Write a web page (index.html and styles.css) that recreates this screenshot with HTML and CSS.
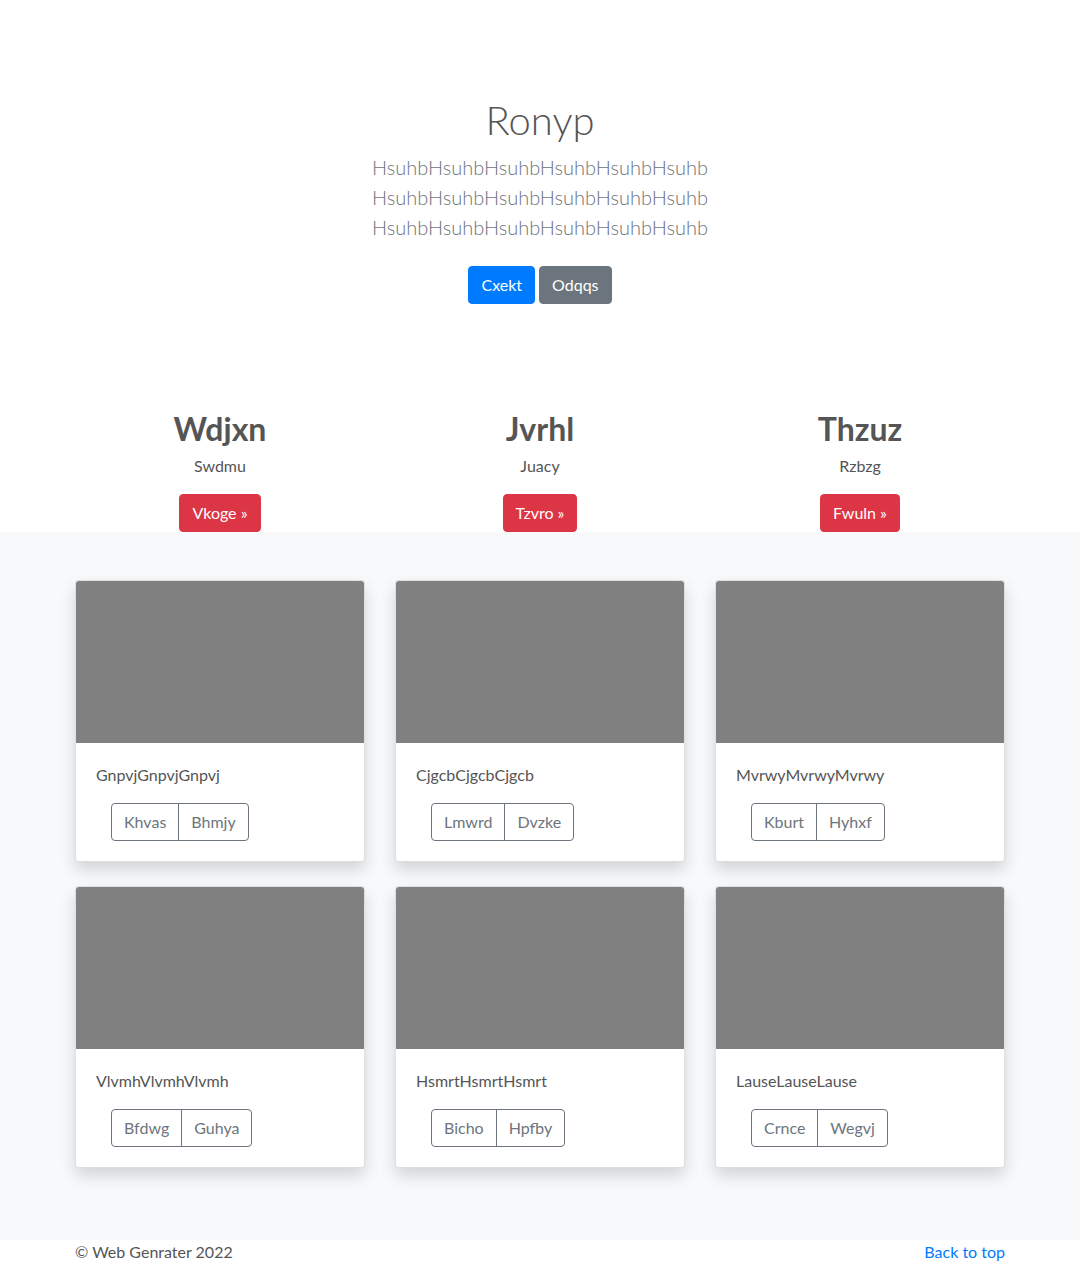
FILE: index.html
```html
<!DOCTYPE html>
<html lang="en">
<head>
<meta charset="utf-8">
<title>Ronyp</title>
<link rel="stylesheet" href="styles.css">
</head>
<body>
<main>
  <section class="hero">
    <div class="container">
      <h1 class="hero-title">Ronyp</h1>
      <p class="lead">HsuhbHsuhbHsuhbHsuhbHsuhbHsuhb<br>HsuhbHsuhbHsuhbHsuhbHsuhbHsuhb<br>HsuhbHsuhbHsuhbHsuhbHsuhbHsuhb</p>
      <p class="hero-actions">
        <a href="#" class="btn btn-primary">Cxekt</a>
        <a href="#" class="btn btn-secondary">Odqqs</a>
      </p>
    </div>
  </section>

  <section class="features">
    <div class="container feature-row">
      <div class="feature">
        <h2>Wdjxn</h2>
        <p>Swdmu</p>
        <a href="#" class="btn btn-danger">Vkoge &raquo;</a>
      </div>
      <div class="feature">
        <h2>Jvrhl</h2>
        <p>Juacy</p>
        <a href="#" class="btn btn-danger">Tzvro &raquo;</a>
      </div>
      <div class="feature">
        <h2>Thzuz</h2>
        <p>Rzbzg</p>
        <a href="#" class="btn btn-danger">Fwuln &raquo;</a>
      </div>
    </div>
  </section>

  <section class="album">
    <div class="container card-grid">
      <div class="card">
        <div class="thumb"></div>
        <div class="card-body">
          <p class="card-text">GnpvjGnpvjGnpvj</p>
          <div class="btn-group"><a href="#" class="btn btn-outline">Khvas</a><a href="#" class="btn btn-outline">Bhmjy</a></div>
        </div>
      </div>
      <div class="card">
        <div class="thumb"></div>
        <div class="card-body">
          <p class="card-text">CjgcbCjgcbCjgcb</p>
          <div class="btn-group"><a href="#" class="btn btn-outline">Lmwrd</a><a href="#" class="btn btn-outline">Dvzke</a></div>
        </div>
      </div>
      <div class="card">
        <div class="thumb"></div>
        <div class="card-body">
          <p class="card-text">MvrwyMvrwyMvrwy</p>
          <div class="btn-group"><a href="#" class="btn btn-outline">Kburt</a><a href="#" class="btn btn-outline">Hyhxf</a></div>
        </div>
      </div>
      <div class="card">
        <div class="thumb"></div>
        <div class="card-body">
          <p class="card-text">VlvmhVlvmhVlvmh</p>
          <div class="btn-group"><a href="#" class="btn btn-outline">Bfdwg</a><a href="#" class="btn btn-outline">Guhya</a></div>
        </div>
      </div>
      <div class="card">
        <div class="thumb"></div>
        <div class="card-body">
          <p class="card-text">HsmrtHsmrtHsmrt</p>
          <div class="btn-group"><a href="#" class="btn btn-outline">Bicho</a><a href="#" class="btn btn-outline">Hpfby</a></div>
        </div>
      </div>
      <div class="card">
        <div class="thumb"></div>
        <div class="card-body">
          <p class="card-text">LauseLauseLause</p>
          <div class="btn-group"><a href="#" class="btn btn-outline">Crnce</a><a href="#" class="btn btn-outline">Wegvj</a></div>
        </div>
      </div>
    </div>
  </section>
</main>

<footer class="footer">
  <div class="container footer-row">
    <p class="copy">&copy; Web Genrater 2022</p>
    <a href="#" class="back-top">Back to top</a>
  </div>
</footer>
</body>
</html>
```

FILE: styles.css
```css
* { box-sizing: border-box; }

body {
  margin: 0;
  font-family: "Lato", "Open Sans", "Liberation Sans", sans-serif;
  font-size: 16px;
  line-height: 1.5;
  color: #555;
  background: #fff;
}

a { text-decoration: none; }

.container {
  width: 960px;
  margin: 0 auto;
  padding: 0 15px;
}

/* Hero */
.hero {
  padding-top: 96px;
  padding-bottom: 97px;
  text-align: center;
}

.hero-title {
  margin: 0 0 8px;
  font-size: 40px;
  font-weight: 300;
  line-height: 1.2;
  color: #555;
}

.lead {
  margin: 0 0 17px;
  font-size: 20px;
  font-weight: 300;
  line-height: 1.5;
  color: #6c757d;
}

.hero-actions {
  margin: 0;
  display: flex;
  justify-content: center;
  gap: 4px;
  padding: 7px 0;
}

/* Buttons */
.btn {
  display: inline-block;
  font-size: 16px;
  line-height: 24px;
  padding: 6px 12px;
  border: 1px solid transparent;
  border-radius: 4px;
  color: #fff;
}

.btn-primary { background: #007bff; border-color: #007bff; }
.btn-secondary { background: #6c757d; border-color: #6c757d; }
.btn-danger { background: #dc3545; border-color: #dc3545; }

/* Features */
.feature-row {
  display: grid;
  grid-template-columns: repeat(3, 1fr);
  padding: 0;
}

.feature {
  text-align: center;
  padding: 0 15px;
}

.feature h2 {
  margin: 0 0 6px;
  font-size: 32px;
  font-weight: 700;
  line-height: 1.2;
  color: #555;
  padding-top: 2px;
}

.feature p {
  margin: 0 0 16px;
  font-size: 16px;
}

/* Album */
.album {
  background: #f8f9fa;
  padding: 48px 0;
}

.card-grid {
  display: grid;
  grid-template-columns: repeat(3, 1fr);
  column-gap: 30px;
  row-gap: 24px;
  padding-bottom: 24px;
}

.card {
  background: #fff;
  border: 1px solid rgba(0, 0, 0, 0.125);
  border-radius: 4px;
  overflow: hidden;
  box-shadow: 0 8px 16px rgba(0, 0, 0, 0.15);
}

.thumb {
  height: 162px;
  background: #808080;
}

.card-body {
  padding: 20px;
}

.card-text {
  margin: 0 0 16px;
  font-size: 16px;
}

.btn-group {
  display: inline-flex;
  margin-left: 15px;
}

.btn-outline {
  color: #6c757d;
  border-color: #6c757d;
  background: transparent;
}

.btn-group .btn-outline:first-child {
  border-top-right-radius: 0;
  border-bottom-right-radius: 0;
}

.btn-group .btn-outline:last-child {
  margin-left: -1px;
  border-top-left-radius: 0;
  border-bottom-left-radius: 0;
}

/* Footer */
.footer {
  color: #555;
}

.footer-row {
  display: flex;
  justify-content: space-between;
  align-items: flex-start;
}

.copy {
  margin: 0;
  font-size: 16px;
}

.back-top {
  color: #007bff;
}
```
